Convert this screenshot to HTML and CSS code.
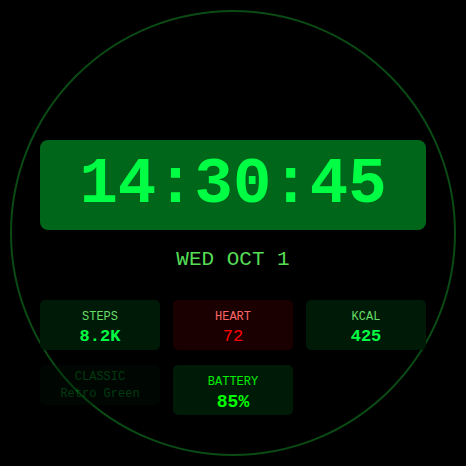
FILE: index.html
```html
<!DOCTYPE html>
<html lang="en">
<head>
    <meta charset="UTF-8">
    <meta name="viewport" content="width=device-width, initial-scale=1.0">
    <title>Retro Watch</title>
    <link rel="stylesheet" href="styles.css">
</head>
<body>
    <div class="watch">
        <div class="time">14:30:45</div>
        <div class="date">WED OCT 1</div>

        <div class="stats">
            <div class="stat">
                <span class="label">STEPS</span>
                <span class="value">8.2K</span>
            </div>
            <div class="stat heart">
                <span class="label">HEART</span>
                <span class="value">72</span>
            </div>
            <div class="stat">
                <span class="label">KCAL</span>
                <span class="value">425</span>
            </div>
            <div class="stat theme">
                <span class="label">CLASSIC</span>
                <span class="value">Retro Green</span>
            </div>
            <div class="stat battery">
                <span class="label">BATTERY</span>
                <span class="value">85%</span>
            </div>
        </div>
    </div>
</body>
</html>
```

FILE: styles.css
```css
body {
    margin: 0;
    background-color: #000;
    font-family: "Courier New", "Nimbus Mono PS", "FreeMono", "Liberation Mono", monospace;
    display: flex;
    justify-content: center;
    align-items: center;
    height: 466px;
}
.watch {
    width: 446px;
    height: 446px;
    box-sizing: border-box;
    border: 2px solid #0a4a14;
    border-radius: 50%;
    padding: 128px 28px 0;
}
.time {
    background-color: #00661a;
    color: #00ff44;
    border-radius: 8px;
    height: 90px;
    display: flex;
    justify-content: center;
    align-items: center;
    font-size: 64px;
    font-weight: bold;
}
.date {
    color: #55dd55;
    font-size: 21px;
    text-align: center;
    margin-top: 18px;
    line-height: 24px;
}
.stats {
    display: grid;
    grid-template-columns: repeat(3, 1fr);
    column-gap: 13px;
    row-gap: 15px;
    align-items: start;
    margin-top: 28px;
}
.stat {
    background-color: #001a08;
    border-radius: 5px;
    height: 50px;
    box-sizing: border-box;
    padding-top: 10px;
    display: flex;
    flex-direction: column;
    align-items: center;
}
.label {
    color: #66dd66;
    font-size: 12px;
    line-height: 14px;
}
.value {
    color: #00ff44;
    font-size: 17px;
    font-weight: bold;
    line-height: 20px;
    margin-top: 3px;
}
.heart {
    background-color: #1a0000;
}
.heart .label {
    color: #ff6666;
}
.heart .value {
    color: #ff0000;
    font-weight: normal;
}
.theme {
    height: 40px;
    padding-top: 5px;
    opacity: 0.3;
}
.theme .label {
    color: #00bb33;
}
.theme .value {
    color: #00bb33;
    font-size: 12px;
    font-weight: normal;
    line-height: 14px;
    margin-top: 3px;
}
.battery .label {
    color: #00ee00;
}
.battery .value {
    color: #00ff00;
    font-size: 18px;
}
```
